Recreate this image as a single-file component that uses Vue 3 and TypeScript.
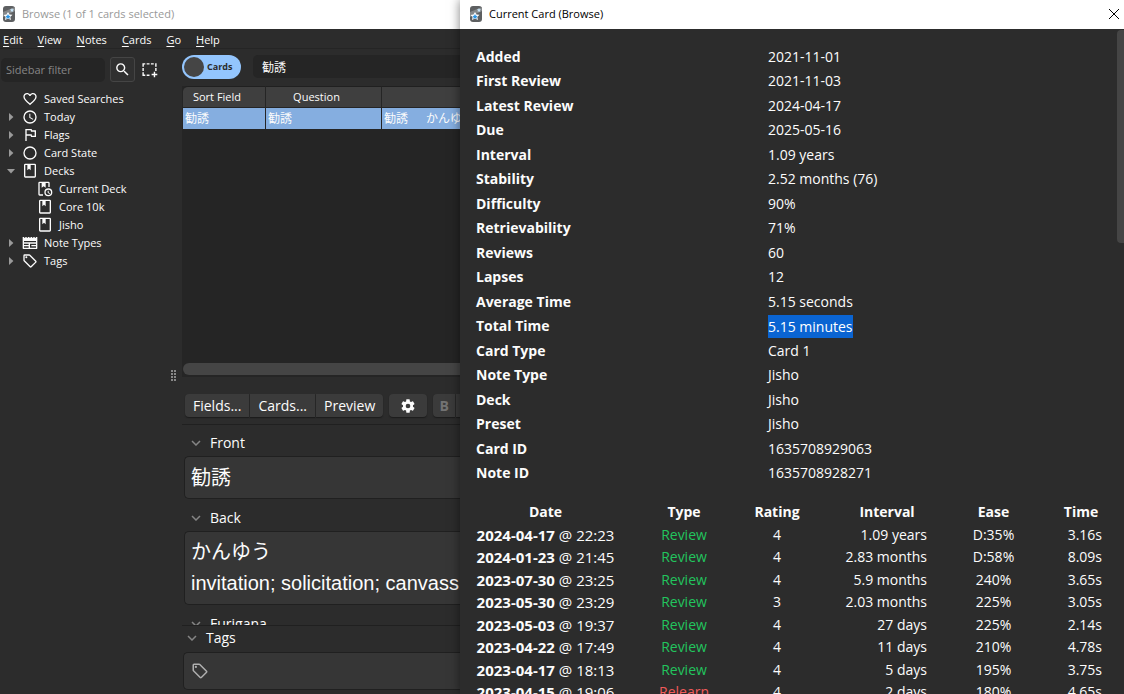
<script setup lang="ts">
import { ref } from 'vue'

interface TreeItem {
  label: string
  icon: string
  arrow: 'closed' | 'open' | 'none'
  child?: boolean
}

interface Review {
  date: string
  time: string
  type: string
  rating: number
  interval: string
  ease: string
  taken: string
}

const menus = ['Edit', 'View', 'Notes', 'Cards', 'Go', 'Help']

const tree: TreeItem[] = [
  { label: 'Saved Searches', icon: 'heart', arrow: 'none' },
  { label: 'Today', icon: 'clock', arrow: 'closed' },
  { label: 'Flags', icon: 'flag', arrow: 'closed' },
  { label: 'Card State', icon: 'circle', arrow: 'closed' },
  { label: 'Decks', icon: 'deck', arrow: 'open' },
  { label: 'Current Deck', icon: 'deckClock', arrow: 'none', child: true },
  { label: 'Core 10k', icon: 'deck', arrow: 'none', child: true },
  { label: 'Jisho', icon: 'deck', arrow: 'none', child: true },
  { label: 'Note Types', icon: 'notetype', arrow: 'closed' },
  { label: 'Tags', icon: 'tag', arrow: 'closed' },
]

const icons: Record<string, string> = {
  heart:
    'M12.1 18.55l-.1.1-.11-.1C7.14 14.24 4 11.39 4 8.5 4 6.5 5.5 5 7.5 5c1.54 0 3.04 1 3.57 2.36h1.86C13.46 6 14.96 5 16.5 5c2 0 3.5 1.5 3.5 3.5 0 2.89-3.14 5.74-7.9 10.05M16.5 3c-1.74 0-3.41.81-4.5 2.08C10.91 3.81 9.24 3 7.5 3 4.42 3 2 5.41 2 8.5c0 3.77 3.4 6.86 8.55 11.53L12 21.35l1.45-1.32C18.6 15.36 22 12.27 22 8.5 22 5.41 19.58 3 16.5 3z',
  clock:
    'M12 20a8 8 0 0 0 8-8 8 8 0 0 0-8-8 8 8 0 0 0-8 8 8 8 0 0 0 8 8m0-18a10 10 0 0 1 10 10 10 10 0 0 1-10 10C6.47 22 2 17.5 2 12A10 10 0 0 1 12 2m.5 5v5.25l4.5 2.67-.75 1.23L11 13V7h1.5z',
  flag: 'M5 3h9.500l.5 2h6v10h-7.500l-.5-2H7v8H5V3m2 2v6h7.500l.5 2h4V7h-5.500L13 5H7z',
  circle:
    'M12 20a8 8 0 0 1-8-8 8 8 0 0 1 8-8 8 8 0 0 1 8 8 8 8 0 0 1-8 8m0-18A10 10 0 0 0 2 12a10 10 0 0 0 10 10 10 10 0 0 0 10-10A10 10 0 0 0 12 2z',
  deck: 'M19 1a2 2 0 0 1 2 2v17a2 2 0 0 1-2 2H5a2 2 0 0 1-2-2V3a2 2 0 0 1 2-2h14m0 2h-6v8l-2.500-2.250L8 11V3H5v17h14V3z',
  deckClock:
    'M4 1h13a2 2 0 0 1 2 2v6h-2V3h-4v7L10 8 7 10V3H4v17h5v2H4a2 2 0 0 1-2-2V3a2 2 0 0 1 2-2m13 10a6 6 0 1 1 0 12 6 6 0 0 1 0-12m0 2a4 4 0 1 0 0 8 4 4 0 0 0 0-8m-1 1.500h1.500v2.600l2 1.200-.75 1.200-2.750-1.700z',
  notetype:
    'M1 3h2v1h2V3h2v1h2V3h2v1h2V3h2v1h2V3h2v1h2V3h2v17a1 1 0 0 1-1 1H2a1 1 0 0 1-1-1V3m2 6v2h18V9H3m0 4v2h7v-2H3m0 4v2h7v-2H3m9-4v6h9v-6h-9m2 2h7v2h-7v-2z',
  tag: 'M21.41 11.58l-9-9A2 2 0 0 0 11 2H4a2 2 0 0 0-2 2v7a2 2 0 0 0 .59 1.42l9 9A2 2 0 0 0 13 22a2 2 0 0 0 1.41-.59l7-7A2 2 0 0 0 22 13a2 2 0 0 0-.59-1.42M13 20l-9-9V4h7l9 9M6.500 5A1.500 1.500 0 1 1 5 6.500 1.500 1.500 0 0 1 6.500 5z',
  search:
    'M9.500 3A6.500 6.500 0 0 1 16 9.500c0 1.610-.590 3.090-1.560 4.230l.27.27h.79l5 5-1.500 1.500-5-5v-.79l-.27-.27A6.516 6.516 0 0 1 9.500 16 6.500 6.500 0 0 1 3 9.500 6.500 6.500 0 0 1 9.500 3m0 2C7 5 5 7 5 9.500S7 14 9.500 14 14 12 14 9.500 12 5 9.500 5z',
  select:
    'M2 3h4v2H4v3H2V3m6 0h4v2H8V3m6 0h4v2h-4V3m6 0h2v5h-2V3M2 10h2v4H2v-4m18 0h2v4h-2v-4M2 16h2v3h2v2H2v-5m6 3h4v2H8v-2m10-4h2v3h3v2h-3v3h-2v-3h-3v-2h3v-3z',
  gear: 'M12 15.500A3.500 3.500 0 0 1 8.500 12 3.500 3.500 0 0 1 12 8.500a3.500 3.500 0 0 1 3.500 3.500 3.500 3.500 0 0 1-3.500 3.500m7.430-2.530c.04-.32.07-.64.07-.97s-.03-.66-.07-1l2.110-1.630c.19-.15.24-.42.12-.64l-2-3.460c-.12-.22-.39-.31-.61-.22l-2.490 1c-.52-.39-1.060-.73-1.690-.98l-.37-2.650A.506.506 0 0 0 14 2h-4c-.25 0-.46.18-.5.42l-.37 2.650c-.63.25-1.170.59-1.690.98l-2.490-1c-.22-.09-.49 0-.61.22l-2 3.460c-.13.22-.07.49.12.64L4.570 11c-.04.34-.07.67-.07 1s.03.65.07.97l-2.110 1.660c-.19.15-.25.42-.12.64l2 3.460c.12.22.39.3.61.22l2.490-1.010c.52.4 1.060.74 1.690.99l.37 2.650c.04.24.25.42.5.42h4c.25 0 .46-.18.5-.42l.37-2.650c.63-.26 1.170-.59 1.690-.99l2.490 1.010c.22.08.49 0 .61-.22l2-3.460c.12-.22.07-.49-.12-.64l-2.110-1.660z',
}

const info: [string, string][] = [
  ['Added', '2021-11-01'],
  ['First Review', '2021-11-03'],
  ['Latest Review', '2024-04-17'],
  ['Due', '2025-05-16'],
  ['Interval', '1.09 years'],
  ['Stability', '2.52 months (76)'],
  ['Difficulty', '90%'],
  ['Retrievability', '71%'],
  ['Reviews', '60'],
  ['Lapses', '12'],
  ['Average Time', '5.15 seconds'],
  ['Total Time', '5.15 minutes'],
  ['Card Type', 'Card 1'],
  ['Note Type', 'Jisho'],
  ['Deck', 'Jisho'],
  ['Preset', 'Jisho'],
  ['Card ID', '1635708929063'],
  ['Note ID', '1635708928271'],
]

const reviews: Review[] = [
  { date: '2024-04-17', time: '22:23', type: 'Review', rating: 4, interval: '1.09 years', ease: 'D:35%', taken: '3.16s' },
  { date: '2024-01-23', time: '21:45', type: 'Review', rating: 4, interval: '2.83 months', ease: 'D:58%', taken: '8.09s' },
  { date: '2023-07-30', time: '23:25', type: 'Review', rating: 4, interval: '5.9 months', ease: '240%', taken: '3.65s' },
  { date: '2023-05-30', time: '23:29', type: 'Review', rating: 3, interval: '2.03 months', ease: '225%', taken: '3.05s' },
  { date: '2023-05-03', time: '19:37', type: 'Review', rating: 4, interval: '27 days', ease: '225%', taken: '2.14s' },
  { date: '2023-04-22', time: '17:49', type: 'Review', rating: 4, interval: '11 days', ease: '210%', taken: '4.78s' },
  { date: '2023-04-17', time: '18:13', type: 'Review', rating: 4, interval: '5 days', ease: '195%', taken: '3.75s' },
  { date: '2023-04-15', time: '19:06', type: 'Relearn', rating: 4, interval: '2 days', ease: '180%', taken: '4.65s' },
]

const filter = ref('')
const query = ref('勧誘')
const front = ref('勧誘')
const back = ref('かんゆう\ninvitation; solicitation; canvass')
</script>

<template>
  <div class="desktop">
    <section class="window browse">
      <header class="titlebar inactive">
        <svg class="logo" viewBox="0 0 14 16" aria-hidden="true">
          <rect x="1" y="0" width="12" height="16" rx="3" fill="#5d5f61" />
          <path d="M1 6 13 1v4L1 11z" fill="#85888a" />
          <path d="M6 6l1.500 2.500 3 .3-2.200 2.200.7 3-3-1.500-3 1.500.6-3L1.500 9l3-.5z" fill="#fff" />
          <path d="M6 8l.9 1.700 1.700.2-1.200 1.300.3 1.700L6 12l-1.700.9.3-1.700-1.200-1.300 1.700-.2z" fill="#2b95e5" />
          <path d="M10 2l.6 1.300 1.400.2-1 1 .2 1.500-1.300-.7-1.200.7.2-1.500-1-1 1.500-.2z" fill="#c9e6fa" />
        </svg>
        <h1>Browse (1 of 1 cards selected)</h1>
      </header>

      <nav class="menubar">
        <button v-for="m in menus" :key="m" type="button"><u>{{ m[0] }}</u>{{ m.slice(1) }}</button>
      </nav>

      <div class="panes">
        <aside class="sidebar">
          <div class="filter-row">
            <input v-model="filter" type="text" placeholder="Sidebar filter" aria-label="Sidebar filter" />
            <button class="tool framed" type="button" aria-label="Search">
              <svg viewBox="0 0 24 24"><path :d="icons.search" /></svg>
            </button>
            <button class="tool" type="button" aria-label="Select">
              <svg viewBox="0 0 24 24"><path :d="icons.select" /></svg>
            </button>
          </div>
          <ul class="tree">
            <li v-for="item in tree" :key="item.label" :class="{ child: item.child }">
              <span class="arrow" :class="item.arrow"></span>
              <svg viewBox="0 0 24 24" aria-hidden="true"><path :d="icons[item.icon]" /></svg>
              <span>{{ item.label }}</span>
            </li>
          </ul>
        </aside>

        <div class="grip" aria-hidden="true"></div>

        <main class="main">
          <div class="search-row">
            <button class="switch" type="button" role="switch" aria-checked="false">
              <span class="knob"></span><span>Cards</span>
            </button>
            <input v-model="query" type="text" aria-label="Search cards" />
          </div>

          <div class="grid">
            <table>
              <colgroup>
                <col class="c-sort" />
                <col class="c-question" />
                <col />
              </colgroup>
              <thead>
                <tr>
                  <th>Sort Field</th>
                  <th>Question</th>
                  <th></th>
                </tr>
              </thead>
              <tbody>
                <tr>
                  <td>勧誘</td>
                  <td>勧誘</td>
                  <td><span class="word">勧誘</span><span>かんゆう</span></td>
                </tr>
              </tbody>
            </table>
            <div class="hscroll"></div>
          </div>

          <div class="editor">
            <div class="toolbar">
              <div class="group">
                <button type="button">Fields...</button>
                <button type="button">Cards...</button>
                <button type="button">Preview</button>
              </div>
              <div class="group">
                <button class="gear" type="button" aria-label="Options">
                  <svg viewBox="0 0 24 24"><path :d="icons.gear" /></svg>
                </button>
              </div>
              <div class="group">
                <button class="bold" type="button" disabled>B</button>
                <button class="bold" type="button" disabled aria-label="Italic"></button>
              </div>
            </div>

            <div class="fields">
              <label class="field-label" for="front">
                <svg viewBox="0 0 10 6"><path d="M1 1l4 4 4-4" /></svg>Front
              </label>
              <input id="front" v-model="front" class="field" type="text" />
              <label class="field-label" for="back">
                <svg viewBox="0 0 10 6"><path d="M1 1l4 4 4-4" /></svg>Back
              </label>
              <textarea id="back" v-model="back" class="field" rows="2" wrap="off"></textarea>
              <div class="field-label">
                <svg viewBox="0 0 10 6"><path d="M1 1l4 4 4-4" /></svg>Furigana
              </div>
            </div>

            <div class="tags">
              <div class="tags-label">
                <svg viewBox="0 0 10 6"><path d="M1 1l4 4 4-4" /></svg>Tags
              </div>
              <button class="tag-box" type="button" aria-label="Add tag">
                <svg viewBox="0 0 24 24"><path :d="icons.tag" /></svg>
              </button>
            </div>
          </div>
        </main>
      </div>
    </section>

    <section class="window dialog">
      <header class="titlebar">
        <svg class="logo" viewBox="0 0 14 16" aria-hidden="true">
          <rect x="1" y="0" width="12" height="16" rx="3" fill="#5d5f61" />
          <path d="M1 6 13 1v4L1 11z" fill="#85888a" />
          <path d="M6 6l1.500 2.500 3 .3-2.200 2.200.7 3-3-1.500-3 1.500.6-3L1.500 9l3-.5z" fill="#fff" />
          <path d="M6 8l.9 1.700 1.700.2-1.200 1.300.3 1.700L6 12l-1.700.9.3-1.700-1.200-1.300 1.700-.2z" fill="#2b95e5" />
          <path d="M10 2l.6 1.300 1.400.2-1 1 .2 1.500-1.300-.7-1.200.7.2-1.500-1-1 1.500-.2z" fill="#c9e6fa" />
        </svg>
        <h1>Current Card (Browse)</h1>
        <button class="close" type="button" aria-label="Close">
          <svg viewBox="0 0 12 12"><path d="M1 1l10 10M11 1L1 11" /></svg>
        </button>
      </header>

      <div class="dialog-body">
        <div class="content">
          <table class="info">
            <colgroup>
              <col class="i-name" />
              <col class="i-value" />
            </colgroup>
            <tbody>
              <tr v-for="[name, value] in info" :key="name">
                <th scope="row">{{ name }}</th>
                <td><mark v-if="name === 'Total Time'">{{ value }}</mark><template v-else>{{ value }}</template></td>
              </tr>
            </tbody>
          </table>

          <table class="history">
            <colgroup>
              <col class="h-date" />
              <col class="h-type" />
              <col class="h-rating" />
              <col class="h-interval" />
              <col class="h-ease" />
              <col class="h-time" />
            </colgroup>
            <thead>
              <tr>
                <th>Date</th>
                <th>Type</th>
                <th>Rating</th>
                <th class="interval-head">Interval</th>
                <th>Ease</th>
                <th>Time</th>
              </tr>
            </thead>
            <tbody>
              <tr v-for="r in reviews" :key="r.date">
                <td class="date"><b>{{ r.date }}</b> @ {{ r.time }}</td>
                <td :class="r.type.toLowerCase()">{{ r.type }}</td>
                <td>{{ r.rating }}</td>
                <td class="right">{{ r.interval }}</td>
                <td>{{ r.ease }}</td>
                <td class="right">{{ r.taken }}</td>
              </tr>
            </tbody>
          </table>
        </div>
        <div class="vscroll"></div>
      </div>
    </section>
  </div>
</template>

<style>
html,
body,
#app {
  height: 100%;
}
body {
  background: #2c2c2c;
  overflow: hidden;
}
</style>

<style scoped>
.desktop {
  display: grid;
  grid-template-columns: minmax(0, 460fr) minmax(0, 664fr);
  height: 100vh;
  overflow: hidden;
  color: #fcfcfc;
  font: 11px/18px 'Open Sans', 'Noto Sans CJK JP', sans-serif;
}
* {
  box-sizing: border-box;
}
button,
input,
textarea {
  font: inherit;
  color: inherit;
  border: 0;
  margin: 0;
  padding: 0;
  background: none;
  outline: none;
}
svg {
  display: block;
  fill: currentColor;
  flex: none;
}
table {
  border-collapse: separate;
  border-spacing: 0;
  table-layout: fixed;
  width: 100%;
}
th,
td {
  padding: 0;
  white-space: nowrap;
}
.window {
  display: flex;
  flex-direction: column;
  min-height: 0;
  background: #2c2c2c;
}
.browse {
  overflow: hidden;
}
.dialog {
  z-index: 1;
  box-shadow: 0 0 10px rgba(0, 0, 0, 0.5);
}
.titlebar {
  display: flex;
  align-items: center;
  flex: none;
  height: 29px;
  padding: 0 4px 2px 2px;
  background: #fff;
  color: #000;
}
.titlebar.inactive {
  color: #999;
}
.dialog .titlebar {
  padding-left: 9px;
}
.titlebar h1 {
  flex: 1;
  margin: 0 0 0 6px;
  font-size: 11px;
  font-weight: 400;
  white-space: nowrap;
}
.logo {
  width: 14px;
  height: 16px;
}
.close svg {
  width: 12px;
  height: 12px;
  stroke: #000;
}

/* browser window */
.menubar {
  display: flex;
  gap: 15px;
  flex: none;
  height: 20px;
  padding: 1px 3px 0;
  border-bottom: 1px solid #252525;
}
.menubar button {
  line-height: 20px;
}
.menubar u {
  text-underline-offset: 2px;
}
.panes {
  display: flex;
  flex: 1;
  min-height: 0;
}
.sidebar {
  flex: none;
  width: 170px;
}
.filter-row {
  display: flex;
  align-items: center;
  gap: 5px;
  padding: 8px 0 0 1px;
}
.filter-row input {
  width: 104px;
  height: 24px;
  padding: 0 5px;
  border-radius: 5px;
  background: #252525;
}
.filter-row input::placeholder {
  color: #858585;
}
.tool {
  display: grid;
  place-items: center;
  width: 19px;
  height: 25px;
}
.tool svg {
  width: 17px;
  height: 17px;
}
.tool.framed {
  width: 25px;
  border: 1px solid #454545;
  border-radius: 3px;
  background: #303030;
}
.tree {
  margin: 0;
  padding: 8px 0 0 7px;
  list-style: none;
}
.tree li {
  display: flex;
  align-items: center;
  height: 18px;
  white-space: nowrap;
}
.tree li.child {
  padding-left: 15px;
}
.tree svg {
  width: 16px;
  height: 16px;
  margin: 0 6px 0 7px;
}
.arrow {
  width: 8px;
  height: 8px;
}
.arrow.closed {
  background: #9a9a9a;
  clip-path: polygon(25% 0, 80% 50%, 25% 100%);
}
.arrow.open {
  background: #9a9a9a;
  clip-path: polygon(0 25%, 100% 25%, 50% 80%);
}
.grip {
  align-self: center;
  flex: none;
  width: 5px;
  height: 13px;
  margin: 8px 6px 0 1px;
  background: repeating-linear-gradient(#2c2c2c 0 1px, transparent 1px 3px),
    repeating-linear-gradient(90deg, #888 0 2px, #2c2c2c 2px 3px);
}
.main {
  display: flex;
  flex-direction: column;
  flex: 1;
  min-width: 0;
}
.search-row {
  display: flex;
  gap: 12px;
  flex: none;
  padding: 6px 0 7px;
}
.switch {
  display: flex;
  align-items: center;
  gap: 3px;
  flex: none;
  width: 59px;
  height: 24px;
  padding: 2px;
  border-radius: 12px;
  background: #93c5fd;
  color: #2c2c2c;
  font-size: 9px;
  font-weight: 700;
}
.knob {
  width: 20px;
  height: 20px;
  border-radius: 50%;
  background: #454545;
}
.search-row input {
  flex: 1;
  min-width: 0;
  height: 23px;
  padding: 0 9px;
  border-radius: 5px 0 0 5px;
  background: #252525;
  font-size: 12px;
}
.grid {
  display: flex;
  flex-direction: column;
  justify-content: space-between;
  flex: none;
  height: 42vh;
  padding-left: 1px;
  background: #252525;
}
.c-sort {
  width: 83px;
}
.c-question {
  width: 116px;
}
.grid th {
  height: 21px;
  padding-right: 14px;
  border-right: 1px solid #252525;
  border-top: 1px solid #202020;
  background: #3f3f3f;
  font-weight: 400;
}
.grid th:first-child {
  border-top-left-radius: 5px;
}
.grid td {
  height: 22px;
  padding-left: 2px;
  overflow: hidden;
  border-top: 1px solid #252525;
  border-right: 1px solid #252525;
  background: #85aee0;
  font-size: 12px;
}
.grid th:last-child,
.grid td:last-child {
  border-right: 0;
}
.word {
  margin-right: 18px;
}
.hscroll {
  height: 12px;
  margin-bottom: 2px;
  border-radius: 6px 0 0 6px;
  background: #454545;
}
.editor {
  display: flex;
  flex-direction: column;
  flex: 1;
  min-height: 0;
  font-size: 14px;
}
.toolbar {
  display: flex;
  gap: 6px;
  flex: none;
  padding: 17px 0 7px 3px;
  border-bottom: 1px solid #202020;
}
.group {
  display: flex;
  gap: 1px;
}
.group button {
  height: 23px;
  padding: 0 8px;
  background: #3b3b3b;
  box-shadow: 0 1px 1px #1c1c1c;
  line-height: 23px;
}
.group button:first-child {
  border-top-left-radius: 4px;
  border-bottom-left-radius: 4px;
}
.group button:last-child {
  border-top-right-radius: 4px;
  border-bottom-right-radius: 4px;
}
.group .gear {
  padding: 0 11px;
}
.gear svg {
  width: 16px;
  height: 16px;
}
.group .bold {
  width: 22px;
  padding: 0;
  color: #737373;
  font-weight: 700;
}
.fields {
  flex: 1;
  min-height: 0;
  overflow: hidden;
  padding: 3px 0 0 2px;
}
.field-label,
.tags-label {
  display: flex;
  align-items: center;
  gap: 9px;
  height: 28px;
  padding: 2px 0 0 7px;
}
.field-label svg,
.tags-label svg {
  width: 10px;
  height: 6px;
  fill: none;
  stroke: #858585;
  stroke-width: 1.5;
}
.field {
  display: block;
  width: 100%;
  height: 43px;
  margin-bottom: 4px;
  padding: 0 6px 3px;
  border: 1px solid #202020;
  border-right: 0;
  border-radius: 5px 0 0 5px;
  background: #363636;
  font: 20px/31px 'Liberation Sans', 'Noto Sans CJK JP', sans-serif;
}
textarea.field {
  height: 74px;
  padding-top: 5px;
  resize: none;
  overflow: hidden;
  white-space: pre;
}
.tags {
  flex: none;
  padding: 0 0 4px 1px;
  border-top: 1px solid #202020;
}
.tags-label {
  height: 26px;
  padding: 0 0 2px 4px;
}
.tag-box {
  display: flex;
  align-items: center;
  width: 100%;
  height: 38px;
  padding-left: 7px;
  border: 1px solid #202020;
  border-right: 0;
  border-radius: 5px 0 0 5px;
  background: #363636;
  color: #afafaf;
}
.tag-box svg {
  width: 18px;
  height: 18px;
}

/* card info window */
.dialog-body {
  display: flex;
  flex: 1;
  min-height: 0;
  overflow: hidden;
  font-size: 14px;
}
.content {
  flex: 1;
  min-width: 0;
  padding: 15px 15px 0 16px;
}
.vscroll {
  flex: none;
  width: 7px;
  height: 32%;
  margin-top: 1px;
  border-radius: 4px 0 0 4px;
  background: #454545;
}
.i-name {
  width: 292px;
}
.i-value {
  width: 334px;
}
.info th,
.info td {
  height: 25px;
  text-align: left;
}
.info tr:nth-child(even) > * {
  height: 24px;
}
mark {
  display: inline-block;
  line-height: 23px;
  background: #0a64d2;
  color: #fff;
}
.history {
  margin-top: 15px;
  text-align: center;
}
.h-date {
  width: 139px;
}
.h-type {
  width: 138px;
}
.h-rating {
  width: 48px;
}
.h-interval {
  width: 126px;
}
.h-ease {
  width: 133px;
}
.h-time {
  width: 42px;
}
.history th,
.history td {
  height: 22px;
}
.history tr:nth-child(odd) > * {
  height: 23px;
}
.history .interval-head {
  padding-left: 46px;
}
.date {
  font-size: 15px;
}
.right {
  text-align: right;
}
.review {
  color: #22c55e;
}
.relearn {
  color: #f05a5a;
}
</style>
